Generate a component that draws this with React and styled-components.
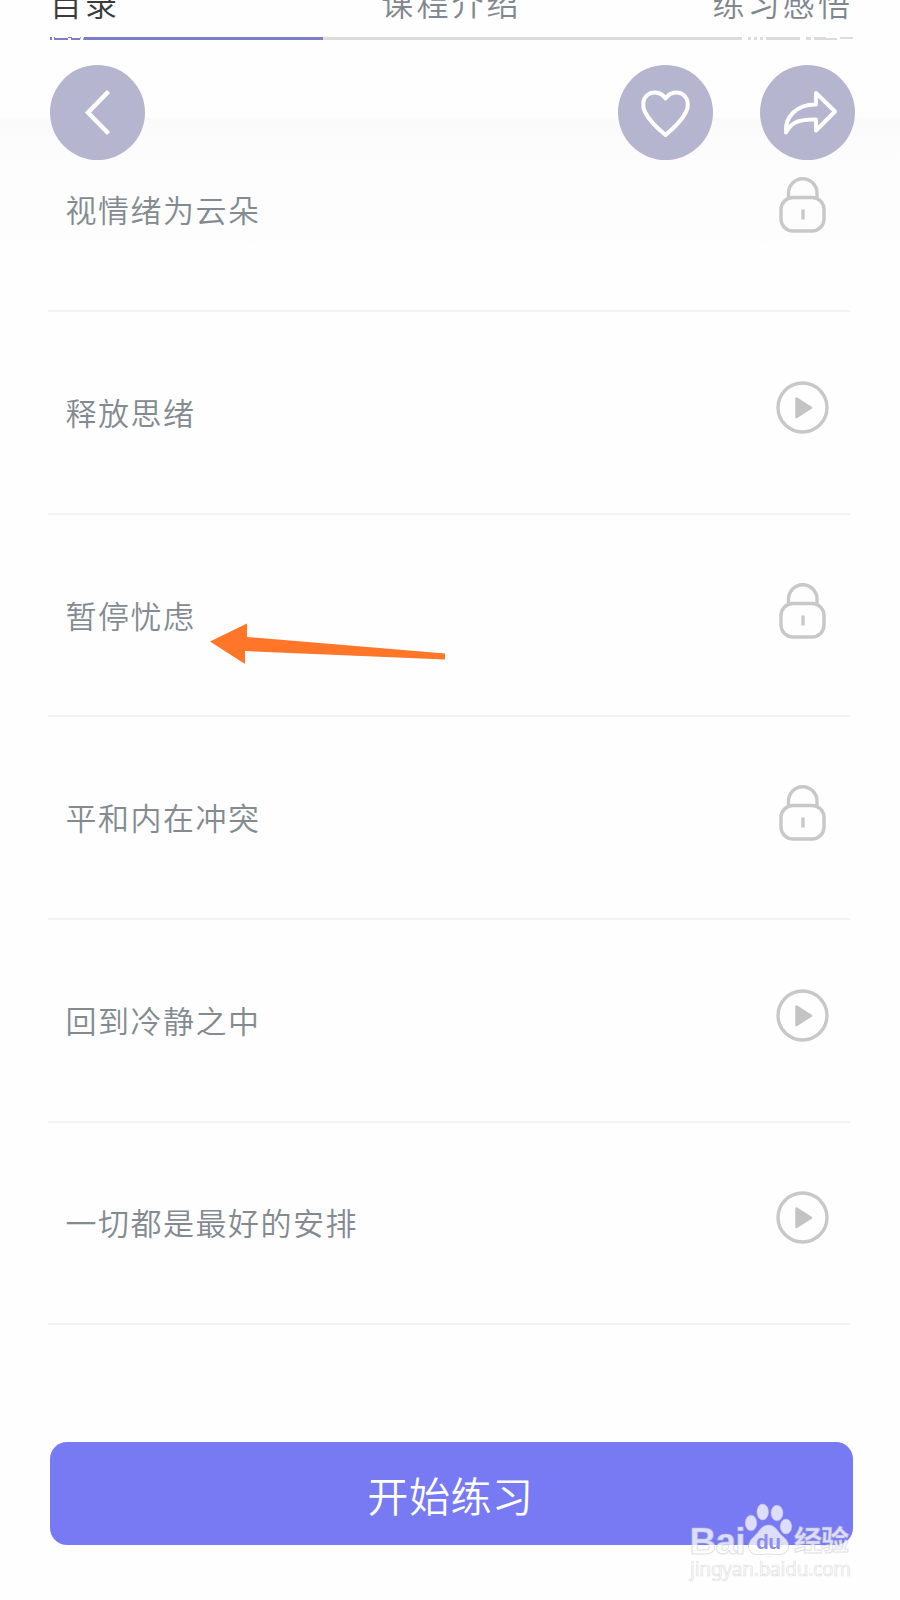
import React from "react";
import styled, { createGlobalStyle } from "styled-components";

const GlobalStyle = createGlobalStyle`
  * {
    box-sizing: border-box;
  }

  body {
    margin: 0;
    background: #fefefe;
    font-family: "Noto Sans CJK SC", "Noto Sans", sans-serif;
    font-weight: 350;
  }
`;

const Screen = styled.div`
  position: relative;
  display: flex;
  flex-direction: column;
  width: 900px;
  height: 1600px;
  overflow: hidden;
`;

const TabBar = styled.nav`
  display: grid;
  grid-template-columns: 1fr auto 1fr;
  align-content: end;
  height: 20px;
  padding: 0 47px 2px 50px;
`;

const Tab = styled.span`
  color: ${(props) => (props.$active ? "#3a3a3c" : "#80888e")};
  font-size: 32px;
  line-height: 32px;
  letter-spacing: 3.1px;
  text-align: ${(props) => props.$align || "left"};
`;

const Track = styled.div`
  position: relative;
  height: 3px;
  margin: 17px 47px 0 50px;
  background: #dcdcde;
  overflow: hidden;
`;

const TrackFill = styled.div`
  width: 273px;
  height: 3px;
  background: #7c7ccd;
`;

// Bits of the white status bar text that lie over the track
const StatusBits = styled.svg`
  position: absolute;
  top: 0;
  left: 0;
`;

const TopShade = styled.div`
  height: 205px;
  background: linear-gradient(#fefefe 0, #fefefe 77px, #fafafb 78px, #fcfcfd 110px, #fdfdfd 200px, #fefefe 205px);
`;

const ActionBar = styled.header`
  display: flex;
  align-items: center;
  gap: 47.5px;
  height: 95px;
  margin: 25px 45px 0 50px;
`;

const RoundButton = styled.button`
  display: flex;
  padding: 0;
  border: none;
  border-radius: 50%;
  width: 95px;
  height: 95px;
  background: #b5b5cf;
  margin-right: ${(props) => (props.$first ? "auto" : "0")};
`;

const List = styled.ul`
  list-style: none;
  margin: -135.4px 50px 0 48px;
  padding: 0;
`;

const Row = styled.li`
  display: flex;
  justify-content: space-between;
  align-items: center;
  height: 202.6px;
  padding: 0 20px 0 17.5px;
  border-bottom: 2px solid #f2f3f7;
`;

const Title = styled.span`
  color: #838b91;
  font-size: 31px;
  line-height: 40px;
  letter-spacing: 1.5px;
  margin-top: -1px;
`;

const IconBox = styled.svg`
  width: 56px;
  height: 60px;
  margin-top: -11px;
  fill: none;
  stroke: #c8c8c8;
  stroke-width: 3.4;
`;

const StartButton = styled.button`
  height: 103px;
  margin: 116.9px 47px 0 50px;
  padding: 0 2px 0 0;
  border: none;
  border-radius: 17px;
  background: #777af3;
  color: #fff;
  font: inherit;
  font-size: 41px;
  letter-spacing: 0.6px;
`;

const Overlay = styled.svg`
  position: absolute;
  left: ${(props) => props.$left}px;
  top: ${(props) => props.$top}px;
`;

const lessons = [
  { title: "视情绪为云朵", locked: true },
  { title: "释放思绪", locked: false },
  { title: "暂停忧虑", locked: true },
  { title: "平和内在冲突", locked: true },
  { title: "回到冷静之中", locked: false },
  { title: "一切都是最好的安排", locked: false },
];

const LockIcon = () => (
  <IconBox viewBox="0 0 56 60">
    <path d="M14.500 23.500V19a14 14 0 0 1 28.500 0V23.500" />
    <rect x="7" y="23.500" width="43" height="33.500" rx="12" />
    <path d="M29 35.500v10" />
  </IconBox>
);

const PlayIcon = () => (
  <IconBox viewBox="0 0 56 60">
    <circle cx="28.500" cy="30.500" r="24.500" />
    <path d="M22.500 21.500L37 30.800L22.500 40z" fill="#c3c3c3" stroke="#c3c3c3" strokeWidth="2.500" strokeLinejoin="round" />
  </IconBox>
);

const BackIcon = () => (
  <svg width="95" height="95" fill="none" stroke="#fff" strokeWidth="4.500">
    <path d="M58.500 26.500L38 47.500L58.500 68.500" />
  </svg>
);

const HeartIcon = () => (
  <svg width="95" height="95" fill="none" stroke="#fff" strokeWidth="4" strokeLinejoin="round">
    <path d="M47.500 33.500C43.500 27.500 35.500 25.500 30 29.500C24.500 33.500 24 41 27 47C31.500 56 39 63 47.500 70C56 63 63.500 56 68 47C71 41 70.500 33.500 65 29.500C59.500 25.500 51.500 27.500 47.500 33.500z" />
  </svg>
);

const ShareIcon = () => (
  <svg width="95" height="95" fill="none" stroke="#fff" strokeWidth="4" strokeLinejoin="round">
    <path d="M56 28L75 46.500L56 65.500V54.500C40 54 31 57 26 67.500C24.500 52 37 39 56 39.500z" />
  </svg>
);

const Watermark = () => (
  <Overlay $left={680} $top={1495} width="190" height="100">
    <g fill="#fff" fillOpacity="0.75" stroke="#c0c0cc" strokeOpacity="0.5" strokeWidth="1">
      <text x="9.500" y="58.500" fontFamily="Liberation Sans, sans-serif" fontWeight="700" fontSize="37" textLength="56">
        Bai
      </text>
      <ellipse cx="71" cy="28" rx="5.800" ry="7.800" />
      <ellipse cx="82.700" cy="17" rx="5.800" ry="8" />
      <ellipse cx="97" cy="18" rx="6" ry="7.800" />
      <ellipse cx="106" cy="31.500" rx="5.800" ry="7.500" />
      <path d="M88.500 30C96 30 97.500 37 103 41.500C107 45 110 49 108 54C105 62 96 59 88.500 59C81 59 73 62 69.500 55C67 50 70 45 74 41.500C79.500 37 81 30 88.500 30z" />
      <text x="114" y="56" fontWeight="700" fontSize="28" textLength="55">
        经验
      </text>
      <text x="10" y="80.500" fontFamily="Noto Sans, sans-serif" fontWeight="400" fontSize="19" textLength="161" strokeWidth="0.700">
        jingyan.baidu.com
      </text>
    </g>
    <text x="76" y="54" fill="#8b8df0" fontFamily="Liberation Sans, sans-serif" fontWeight="700" fontSize="21" textLength="25">
      du
    </text>
  </Overlay>
);

const App = () => {
  return (
    <Screen>
      <GlobalStyle />
      <TabBar>
        <Tab $active>目录</Tab>
        <Tab>课程介绍</Tab>
        <Tab $align="right">练习感悟</Tab>
      </TabBar>
      <Track>
        <TrackFill />
        <StatusBits width="803" height="3" fill="#fff">
          <path d="M2 0h2v3h-2zM5 0h13v1h-13zM18 1h3v2h-3zM22 0h8v1h-8zM31 0h3l-1 3h-3z" />
          <path d="M692 0h6v3h-6zM701 0h3v3h-3zM707 0h3v3h-3zM713 0h3v3h-3zM750 0h6v3h-6zM761 0h3v3h-3zM776 0h12v1h-12zM787 0h3v3h-3zM790 2h13v1h-13z" />
        </StatusBits>
      </Track>
      <TopShade>
        <ActionBar>
          <RoundButton $first>
            <BackIcon />
          </RoundButton>
          <RoundButton>
            <HeartIcon />
          </RoundButton>
          <RoundButton>
            <ShareIcon />
          </RoundButton>
        </ActionBar>
      </TopShade>
      <List>
        {lessons.map((lesson) => (
          <Row key={lesson.title}>
            <Title>{lesson.title}</Title>
            {lesson.locked ? <LockIcon /> : <PlayIcon />}
          </Row>
        ))}
      </List>
      <StartButton>开始练习</StartButton>

      {/* Pointer arrow */}
      <Overlay $left={205} $top={620} width="245" height="50">
        <path d="M5 21.500L42 3.500V17L240 33.500V39.500L40 31V44z" fill="#ff7628" />
      </Overlay>
      <Watermark />
    </Screen>
  );
};

export default App;
